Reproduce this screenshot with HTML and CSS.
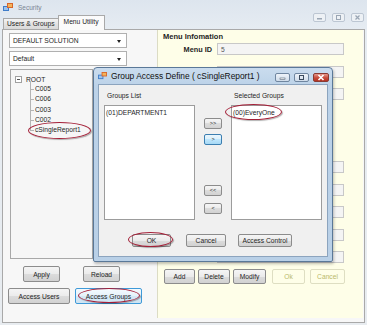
FILE: index.html
```html
<!DOCTYPE html>
<html lang="en">
<head>
    <meta charset="UTF-8">
    <title>Security</title>
    <link rel="stylesheet" href="styles.css">
</head>
<body>
<div class="window">
    <!-- caption + tabs -->
    <div class="header">
        <div class="header-main">
            <div class="caption">
                <svg class="app-icon" width="10" height="9" viewBox="0 0 10 9">
                    <rect x="0" y="3" width="6" height="5" fill="#3f7cc9"/>
                    <rect x="1" y="4" width="4" height="3" fill="#9cc3ee"/>
                    <rect x="4" y="0" width="6" height="5" fill="#d8652a"/>
                    <rect x="5" y="1" width="4" height="3" fill="#f3b45a"/>
                </svg>
                <span class="caption-text">Security</span>
            </div>
            <div class="tabs">
                <div class="tab">Users &amp; Groups</div>
                <div class="tab tab-active">Menu Utility</div>
            </div>
        </div>
        <div class="win-controls">
            <span class="ctl"><svg width="13" height="9" viewBox="0 0 13 9"><rect x="4" y="5" width="5" height="1.5" fill="#9aa6b4"/></svg></span>
            <span class="ctl"><svg width="13" height="9" viewBox="0 0 13 9"><rect x="4.5" y="2.5" width="4" height="4" fill="none" stroke="#9aa6b4"/></svg></span>
            <span class="ctl"><svg width="13" height="9" viewBox="0 0 13 9"><path d="M4.5 2.5 L8.5 6.5 M8.5 2.5 L4.5 6.5" stroke="#9aa6b4" stroke-width="1.2"/></svg></span>
        </div>
    </div>

    <div class="tabpage">
        <!-- left: solution / menu tree -->
        <div class="left-pane">
            <div class="combo"><span>DEFAULT SOLUTION</span><span class="combo-arrow"></span></div>
            <div class="combo"><span>Default</span><span class="combo-arrow"></span></div>
            <div class="tree">
                <div class="tree-root"><span class="expander"></span>ROOT</div>
                <ul class="tree-children">
                    <li>C005</li>
                    <li>C006</li>
                    <li>C003</li>
                    <li>C002</li>
                    <li class="last">cSingleReport1</li>
                </ul>
            </div>
            <div class="btn-row row-apply">
                <button class="btn btn-apply">Apply</button>
                <button class="btn btn-reload">Reload</button>
            </div>
            <div class="btn-row row-access">
                <button class="btn btn-users">Access Users</button>
                <button class="btn btn-groups">Access Groups</button>
            </div>
        </div>

        <!-- right: menu information -->
        <div class="right-pane">
            <div class="group-title">Menu Infomation</div>
            <div class="field"><label>Menu ID</label><div class="input">5</div></div>
            <div class="field"><label></label><div class="input"></div></div>
            <div class="field"><label></label><div class="input"></div></div>
            <div class="field field-gap"><label></label><div class="input"></div></div>
            <div class="field"><label></label><div class="input"></div></div>
            <div class="field"><label></label><div class="input"></div></div>
            <div class="field"><label></label><div class="input"></div></div>
            <div class="field"><label></label><div class="input"></div></div>
            <div class="edit-buttons">
                <button class="btn btn-add">Add</button>
                <button class="btn btn-delete">Delete</button>
                <button class="btn btn-modify">Modify</button>
                <button class="btn btn-off btn-ok">Ok</button>
                <button class="btn btn-off btn-cancel">Cancel</button>
            </div>
        </div>
    </div>

    <!-- modal dialog -->
    <div class="dialog">
        <div class="dlg-title">
            <svg class="app-icon" width="9" height="8" viewBox="0 0 10 9">
                <rect x="0" y="3" width="6" height="5" fill="#3f7cc9"/>
                <rect x="1" y="4" width="4" height="3" fill="#9cc3ee"/>
                <rect x="4" y="0" width="6" height="5" fill="#d8652a"/>
                <rect x="5" y="1" width="4" height="3" fill="#f3b45a"/>
            </svg>
            <span class="dlg-title-text">Group Access Define ( cSingleReport1 )</span>
            <div class="dlg-controls">
                <span class="dctl"><svg width="15" height="9" viewBox="0 0 15 9"><rect x="5" y="5" width="5" height="1.5" fill="#fff" stroke="#3b4b5e" stroke-width=".5"/></svg></span>
                <span class="dctl"><svg width="15" height="9" viewBox="0 0 15 9"><rect x="5.5" y="2.5" width="4" height="4" fill="none" stroke="#3b4b5e"/></svg></span>
                <span class="dctl dctl-close"><svg width="16" height="9" viewBox="0 0 16 9"><path d="M5.5 2 L10.5 7 M10.5 2 L5.5 7" stroke="#fff" stroke-width="1.6"/></svg></span>
            </div>
        </div>
        <div class="dlg-client">
            <div class="dlg-grid">
                <div class="dlg-label">Groups List</div>
                <div></div>
                <div class="dlg-label">Selected Groups</div>
                <div class="listbox">(01)DEPARTMENT1</div>
                <div class="move-col">
                    <button class="btn mv mv-all">&gt;&gt;</button>
                    <button class="btn mv mv-one mv-focus">&gt;</button>
                    <button class="btn mv mv-back-all">&lt;&lt;</button>
                    <button class="btn mv mv-back">&lt;</button>
                </div>
                <div class="listbox">(00)EveryOne</div>
            </div>
            <div class="dlg-buttons">
                <button class="btn dlg-ok">OK</button>
                <button class="btn dlg-cancel">Cancel</button>
                <button class="btn dlg-access">Access Control</button>
            </div>
        </div>
    </div>

    <!-- red annotation circles -->
    <span class="mark mark-tree"></span>
    <span class="mark mark-everyone"></span>
    <span class="mark mark-ok"></span>
    <span class="mark mark-groups"></span>
</div>
</body>
</html>
```

FILE: styles.css
```css
* {
    box-sizing: border-box;
}

body {
    margin: 0;
    font-family: 'Liberation Sans', Arial, sans-serif;
    font-size: 6.7px;
    color: #1e1e1e;
    background: #e4eaf1;
}

.window {
    position: relative;
    width: 367px;
    height: 325px;
    overflow: hidden;
    background: linear-gradient(#dde5ee, #e6ecf2 30px, #e8ecf0);
}

/* caption and tabs */
.header {
    display: flex;
    height: 29px;
}

.header-main {
    flex: 1;
    display: flex;
    flex-direction: column;
}

.caption {
    height: 15px;
    display: flex;
    align-items: center;
    padding-left: 3px;
}

.caption-text {
    margin-left: 5px;
    color: #7a8594;
    font-size: 6.5px;
}

.win-controls {
    display: flex;
    gap: 6px;
    margin: 13px 3px 0 0;
    height: 9px;
}

.ctl {
    display: block;
    width: 13px;
    height: 9px;
    border: 1px solid #bcc6d2;
    border-radius: 2px;
    background: #edf1f5;
    line-height: 0;
}

.ctl svg {
    margin: -1px 0 0 -1px;
}

.tabs {
    display: flex;
    align-items: flex-end;
    height: 14px;
    padding-left: 3px;
}

.tab {
    height: 11px;
    padding: 0 3px;
    line-height: 10px;
    border: 1px solid #a9a9a9;
    border-bottom: none;
    background: linear-gradient(#f4f4f4, #e3e3e3 50%, #d9d9d9);
}

.tab-active {
    height: 15px;
    padding: 1px 5px 0;
    margin-left: -1px;
    margin-bottom: -1px;
    background: #fbfbfb;
    position: relative;
    z-index: 1;
}

.tabpage {
    display: flex;
    height: 294px;
    margin: 0 2px;
    border: 1px solid #a9a9a9;
    background: #f7f7f7;
}

/* left pane */
.left-pane {
    width: 154px;
    padding: 3px 0 0 6px;
}

.combo {
    position: relative;
    width: 118px;
    height: 15px;
    margin-bottom: 3px;
    padding-left: 3px;
    line-height: 14px;
    border: 1px solid #b0b0b0;
    background: #fff;
}

.combo-arrow {
    position: absolute;
    right: 5px;
    top: 6px;
    border-left: 2.5px solid transparent;
    border-right: 2.5px solid transparent;
    border-top: 3px solid #222;
}

.tree {
    width: 83px;
    height: 190px;
    margin-left: 1px;
    padding-top: 4px;
    border: 1px solid #a8a8a8;
    background: #f6f6f6;
}

.tree-root {
    display: flex;
    align-items: center;
    height: 10.2px;
    padding-left: 4px;
}

.expander {
    position: relative;
    width: 7px;
    height: 7px;
    margin-right: 4px;
    border: 1px solid #a0a0a0;
    background: #fff;
}

.expander::after {
    content: "";
    position: absolute;
    left: 1px;
    right: 1px;
    top: 2px;
    height: 1px;
    background: #555;
}

.tree-children {
    list-style: none;
    margin: 0;
    padding: 0;
}

.tree-children li {
    position: relative;
    height: 10.2px;
    line-height: 10.2px;
    padding-left: 24px;
}

.tree-children li::before {
    content: "";
    position: absolute;
    left: 19px;
    top: -2px;
    bottom: 0;
    border-left: 1px solid #b4b4b4;
}

.tree-children li.last::before {
    bottom: 50%;
}

.tree-children li::after {
    content: "";
    position: absolute;
    left: 19px;
    top: 50%;
    width: 4px;
    border-top: 1px solid #b4b4b4;
}

/* buttons */
.btn {
    display: block;
    padding: 0;
    font-family: inherit;
    font-size: 6.7px;
    color: #1e1e1e;
    border: 1px solid #8c8c8c;
    border-radius: 2px;
    background: linear-gradient(#f5f5f5, #ebebeb 50%, #dcdcdc 50%, #d2d2d2);
}

.btn-row {
    display: flex;
    height: 16px;
}

.row-apply {
    margin-top: 7px;
}

.row-access {
    margin-top: 6px;
}

.btn-apply {
    width: 37px;
    margin-left: 14px;
}

.btn-reload {
    width: 37px;
    margin-left: 23px;
}

.btn-users {
    width: 62px;
    margin-left: -1px;
}

.btn-groups {
    width: 67px;
    margin-left: 5px;
    border-color: #3f9ad8;
    background: linear-gradient(#f4fafe, #e6f2fa 50%, #d6e9f6 50%, #cfe4f3);
}

/* right pane */
.right-pane {
    width: 206px;
    height: 288px;
    display: flex;
    flex-direction: column;
    padding: 2px 0 0 5px;
    border-left: 1px solid #dcdcc4;
    background: #fefee8;
}

.group-title {
    font-weight: bold;
    font-size: 7.5px;
    height: 10px;
    line-height: 10px;
}

.field {
    display: flex;
    align-items: center;
    height: 12px;
    margin-top: 10.5px;
}

.field:first-of-type {
    margin-top: 0;
}

.group-title + .field {
    margin-top: 1px;
}

.field-gap {
    margin-top: 61px;
}

.field label {
    width: 54px;
    padding-right: 5px;
    text-align: right;
    font-weight: bold;
    font-size: 7.3px;
}

.input {
    width: 127px;
    height: 12px;
    padding-left: 3px;
    line-height: 11px;
    border: 1px solid #c8c8c8;
    background: #f4f4f4;
    color: #555;
}

.edit-buttons {
    display: flex;
    height: 15px;
    margin-top: 6px;
    padding-left: 1px;
}

.btn-add {
    width: 31px;
}

.btn-delete {
    width: 32px;
    margin-left: 3px;
}

.btn-modify {
    width: 33px;
    margin-left: 3px;
}

.btn-off {
    color: #b9b96c;
    border-color: #dedec2;
    background: #fefee8;
}

.btn-ok {
    width: 33px;
    margin-left: 6px;
}

.btn-cancel {
    width: 35px;
    margin-left: 5px;
}

/* dialog */
.dialog {
    position: absolute;
    left: 93px;
    top: 67px;
    width: 240px;
    height: 195px;
    display: flex;
    flex-direction: column;
    border: 1px solid #5a7898;
    border-radius: 4px 4px 2px 2px;
    background: linear-gradient(#cadcee, #bcd2e8 18px, #b9d0e7);
    box-shadow: 1px 2px 3px rgba(0, 0, 0, 0.25);
}

.dlg-title {
    display: flex;
    align-items: center;
    height: 16px;
    padding-left: 4px;
}

.dlg-title-text {
    margin-left: 4px;
    font-size: 8.4px;
    color: #111;
}

.dlg-controls {
    display: flex;
    gap: 4px;
    margin-left: auto;
    margin-right: 3px;
    margin-top: 3px;
}

.dctl {
    display: block;
    width: 15px;
    height: 9px;
    border: 1px solid #6f86a0;
    border-radius: 2px;
    background: linear-gradient(#eef3f9, #cfdcea);
    line-height: 0;
}

.dctl svg {
    margin: -1px 0 0 -1px;
}

.dctl-close {
    width: 16px;
    border-color: #8a3a32;
    background: linear-gradient(#e79a8e, #c64a3a 55%, #b43322);
}

.dlg-client {
    flex: 1;
    margin: 0 4px 4px;
    padding: 5px 0 0 5px;
    border: 1px solid #8ca4be;
    background: #f0f0f0;
}

.dlg-grid {
    display: grid;
    grid-template-columns: 91px 18px 91px;
    grid-template-rows: 15px 115px;
    column-gap: 9px;
}

.dlg-label {
    padding: 2px 0 0 3px;
}

.listbox {
    padding: 3px 0 0 1px;
    border: 1px solid #9c9c9c;
    background: #fff;
}

.move-col {
    display: flex;
    flex-direction: column;
}

.mv {
    width: 18px;
    height: 11px;
    font-size: 5.5px;
    line-height: 9px;
}

.mv-all {
    margin-top: 13px;
}

.mv-one {
    margin-top: 5px;
}

.mv-back-all {
    margin-top: 40px;
}

.mv-back {
    margin-top: 7px;
}

.mv-focus {
    border-color: #3c7fb1;
    background: linear-gradient(#eaf6fd, #d9f0fc 50%, #bee6fd 50%, #a7d9f5);
}

.dlg-buttons {
    display: flex;
    height: 13px;
    margin-top: 14px;
    padding-left: 28px;
}

.dlg-ok {
    width: 39px;
}

.dlg-cancel {
    width: 40px;
    margin-left: 15px;
}

.dlg-access {
    width: 54px;
    margin-left: 12px;
}

/* annotation ellipses */
.mark {
    position: absolute;
    border: 1.5px solid #a41f37;
    border-radius: 50%;
    box-shadow: 1px 1px 1px rgba(0, 0, 0, 0.3);
}

.mark-tree {
    left: 28px;
    top: 122px;
    width: 63px;
    height: 17px;
}

.mark-everyone {
    left: 225px;
    top: 104px;
    width: 57px;
    height: 16px;
}

.mark-ok {
    left: 128px;
    top: 232px;
    width: 45px;
    height: 15px;
}

.mark-groups {
    left: 78px;
    top: 288px;
    width: 62px;
    height: 15px;
}
```
